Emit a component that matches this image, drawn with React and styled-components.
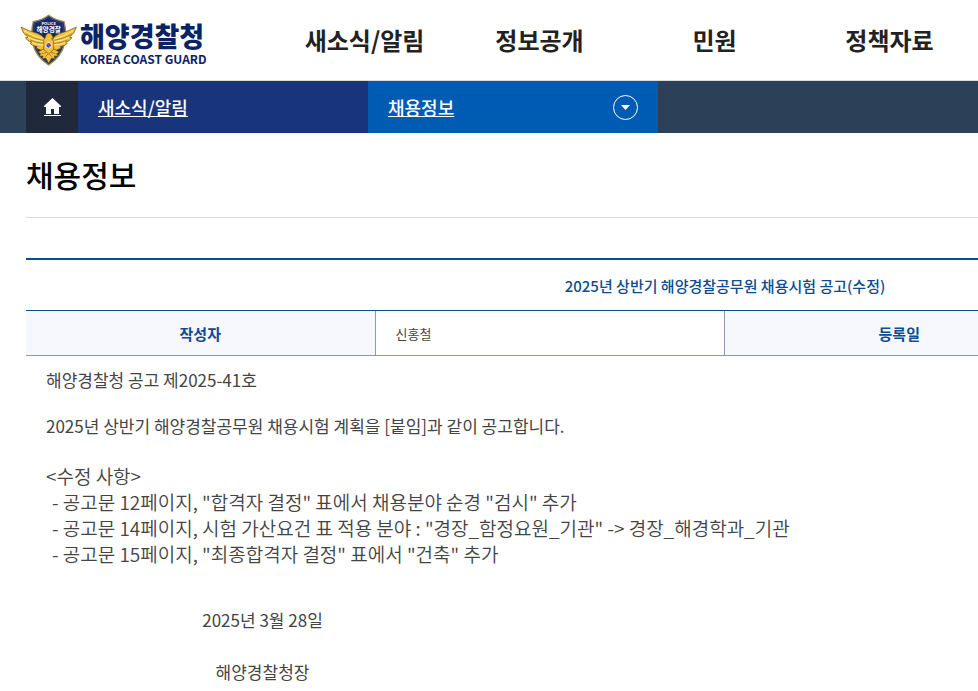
import React from 'react';
import styled, { createGlobalStyle } from 'styled-components';

const GlobalStyle = createGlobalStyle`
  * {
    box-sizing: border-box;
  }
  body {
    margin: 0;
    background-color: #fff;
    color: #444;
    font-family: 'Noto Sans CJK KR', sans-serif;
  }
`;

const Page = styled.div`
  overflow: hidden;
`;

const Header = styled.header`
  display: flex;
  align-items: center;
  min-width: 1450px;
  height: 81px;
  padding-left: 20px;
  border-bottom: 1px solid #ddd;
`;

const Logo = styled.a`
  display: flex;
  align-items: center;
  flex: 0 0 257px;
  gap: 2px;
  color: #0b2265;
  text-decoration: none;
`;

const LogoText = styled.span`
  display: flex;
  flex-direction: column;
  padding-top: 10px;
`;

const LogoName = styled.strong`
  font-size: 27px;
  font-weight: 900;
  line-height: 28px;
`;

const LogoSub = styled.span`
  font-size: 12px;
  font-weight: 700;
  line-height: 18px;
`;

const Nav = styled.nav`
  display: flex;
`;

const NavLink = styled.a`
  width: 175px;
  color: #222;
  font-size: 24px;
  font-weight: 700;
  line-height: 36px;
  text-align: center;
  text-decoration: none;
`;

const LocationBar = styled.nav`
  display: flex;
  height: 52px;
  padding-left: 26px;
  background-color: #2c4158;
`;

const HomeLink = styled.a`
  display: flex;
  align-items: center;
  justify-content: center;
  width: 52px;
  background-color: #20283b;
`;

const Location = styled.div`
  display: flex;
  align-items: center;
  justify-content: space-between;
  width: 290px;
  padding: 0 20px;
  background-color: ${({ $current }) => ($current ? '#005bb3' : '#18347b')};
`;

const LocationLink = styled.a`
  color: #fff;
  font-size: 18px;
  font-weight: 500;
  line-height: 26px;
`;

const ToggleButton = styled.button`
  display: flex;
  padding: 0;
  border: none;
  background: none;
  cursor: pointer;
`;

const Content = styled.main`
  min-width: 1450px;
  padding: 0 26px;
`;

const Title = styled.h1`
  margin: 0 0 40px;
  padding: 19px 0 21px;
  border-bottom: 1px solid #ddd;
  color: #000;
  font-size: 30px;
  font-weight: 500;
  line-height: 44px;
`;

const Table = styled.table`
  width: 100%;
  table-layout: fixed;
  border-collapse: separate;
  border-spacing: 0;
  border-top: 2px solid #0c4c8f;
`;

const Subject = styled.th`
  height: 51px;
  padding: 0;
  border-bottom: 1px solid #0c4c8f;
  color: #0c4c8f;
  font-size: 15px;
  font-weight: 500;
`;

const Label = styled.th`
  height: 45px;
  padding: 0;
  border-right: 1px solid #9295b3;
  border-bottom: 1px solid #9295b3;
  background-color: #f7f8fd;
  color: #0c4c8f;
  font-size: 15px;
  font-weight: 700;
`;

const Value = styled.td`
  padding: 0 20px;
  border-right: ${({ $last }) => ($last ? 'none' : '1px solid #9295b3')};
  border-bottom: 1px solid #9295b3;
  font-size: 13px;
`;

const Article = styled.article`
  padding: 11px 20px;
  font-size: 17px;
  line-height: 26px;
`;

const Paragraph = styled.p`
  margin: 0 0 20px;
`;

const Changes = styled.div`
  margin: 24px 0 40px;
  font-size: 19px;
  font-weight: 350;
`;

const ChangeItem = styled.p`
  margin: 0;
  padding-left: 6px;
`;

const Signature = styled.div`
  display: flex;
  flex-direction: column;
  align-items: center;
  gap: 26px;
  width: 433px;
`;

const menus = ['새소식/알림', '정보공개', '민원', '정책자료'];

const changes = [
  '- 공고문 12페이지, "합격자 결정" 표에서 채용분야 순경 "검시" 추가',
  '- 공고문 14페이지, 시험 가산요건 표 적용 분야 : "경장_함정요원_기관" -> 경장_해경학과_기관',
  '- 공고문 15페이지, "최종합격자 결정" 표에서 "건축" 추가',
];

// 방패 + 독수리 엠블럼
function Emblem() {
  return (
    <svg width="58" height="52" viewBox="6 10 174 156" aria-hidden="true">
      <path d="M92 14 Q112 29 138 33 Q147 66 139 100 Q132 136 92 163 Q52 136 45 100 Q37 66 46 33 Q72 29 92 14Z" fill="#12296a" stroke="#a08a50" strokeWidth="4" />
      <path d="M92 20 Q112 34 134 37 Q141 68 134 98 Q126 132 92 156 Q58 132 50 98 Q43 68 50 37 Q72 34 92 20Z" fill="none" stroke="#35549c" strokeWidth="2" />
      <g fill="#f2c13c" stroke="#6b4d12" strokeWidth="2" strokeLinejoin="round">
        <path d="M9 49 Q34 62 55 67 Q72 72 82 86 L84 120 Q66 120 54 112 L58 108 Q42 106 36 98 L42 95 Q27 91 22 81 L30 80 Q14 70 9 49Z" />
        <path d="M175 49 Q150 62 129 67 Q112 72 102 86 L100 120 Q118 120 130 112 L126 108 Q142 106 148 98 L142 95 Q157 91 162 81 L154 80 Q170 70 175 49Z" />
        <path d="M82 112 L60 124 L68 129 L64 136 L75 136 L73 145 L83 142 L92 158 L101 142 L111 145 L109 136 L120 136 L116 129 L124 124 L102 112Z" />
        <path d="M77 88 L82 80 Q84 69 92 67 Q101 67 103 77 L107 84 L101 84 L107 92 V116 L92 130 L77 116Z" />
      </g>
      <g fill="none" stroke="#fff0a0" strokeWidth="3">
        <path d="M18 60 Q46 77 72 84" />
        <path d="M30 80 Q52 91 76 93" />
        <path d="M42 95 Q58 103 77 103" />
        <path d="M166 60 Q138 77 112 84" />
        <path d="M154 80 Q132 91 108 93" />
        <path d="M142 95 Q126 103 107 103" />
      </g>
      <g fill="none" stroke="#8a6519" strokeWidth="2">
        <path d="M22 70 Q46 84 74 89" />
        <path d="M36 88 Q56 98 76 98" />
        <path d="M162 70 Q138 84 110 89" />
        <path d="M148 88 Q128 98 108 98" />
        <path d="M72 129 L86 125 M82 138 L90 130 M112 129 L98 125 M102 138 L94 130" />
      </g>
      <circle cx="92" cy="104" r="9" fill="#fff" stroke="#d8d8d8" />
      <path d="M85 104 A7 7 0 0 1 99 104 A3.500 3.500 0 0 1 92 104 A3.500 3.500 0 0 0 85 104Z" fill="#d2233c" />
      <path d="M99 104 A7 7 0 0 1 85 104 A3.500 3.500 0 0 1 92 104 A3.500 3.500 0 0 0 99 104Z" fill="#1d4ba0" />
      <text x="92" y="43" fill="#fff" fontSize="12" fontWeight="700" textAnchor="middle">POLICE</text>
      <text x="92" y="63" fill="#fff" fontSize="20" fontWeight="700" textAnchor="middle">해양경찰</text>
    </svg>
  );
}

function HomeIcon() {
  return (
    <svg width="17" height="18" viewBox="0 0 17 18" aria-hidden="true">
      <path d="M8.500 0 L17 8 V9 H15 V16 H10 V11 H7 V16 H2 V9 H0 V8Z" fill="#fff" />
      <path d="M0 17h17v1H0z" fill="#fff" />
    </svg>
  );
}

function App() {
  return (
    <Page>
      <GlobalStyle />
      <Header>
        <Logo href="#">
          <Emblem />
          <LogoText>
            <LogoName>해양경찰청</LogoName>
            <LogoSub>KOREA COAST GUARD</LogoSub>
          </LogoText>
        </Logo>
        <Nav>
          {menus.map((menu) => (
            <NavLink key={menu} href="#">{menu}</NavLink>
          ))}
        </Nav>
      </Header>
      <LocationBar>
        <HomeLink href="#" aria-label="홈">
          <HomeIcon />
        </HomeLink>
        <Location>
          <LocationLink href="#">새소식/알림</LocationLink>
        </Location>
        <Location $current>
          <LocationLink href="#">채용정보</LocationLink>
          <ToggleButton type="button" aria-label="메뉴 열기">
            <svg width="25" height="25" viewBox="0 0 25 25" aria-hidden="true">
              <circle cx="12.500" cy="12.500" r="12" fill="none" stroke="#fff" />
              <path d="M8 10h9l-4.500 5z" fill="#fff" />
            </svg>
          </ToggleButton>
        </Location>
      </LocationBar>
      <Content>
        <Title>채용정보</Title>
        <Table>
          <tbody>
            <tr>
              <Subject colSpan={4}>2025년 상반기 해양경찰공무원 채용시험 공고(수정)</Subject>
            </tr>
            <tr>
              <Label scope="row">작성자</Label>
              <Value>신홍철</Value>
              <Label scope="row">등록일</Label>
              <Value $last />
            </tr>
          </tbody>
        </Table>
        <Article>
          <Paragraph>해양경찰청 공고 제2025-41호</Paragraph>
          <Paragraph>2025년 상반기 해양경찰공무원 채용시험 계획을 [붙임]과 같이 공고합니다.</Paragraph>
          <Changes>
            <div>&lt;수정 사항&gt;</div>
            {changes.map((change) => (
              <ChangeItem key={change}>{change}</ChangeItem>
            ))}
          </Changes>
          <Signature>
            <span>2025년 3월 28일</span>
            <span>해양경찰청장</span>
          </Signature>
        </Article>
      </Content>
    </Page>
  );
}

export default App;
